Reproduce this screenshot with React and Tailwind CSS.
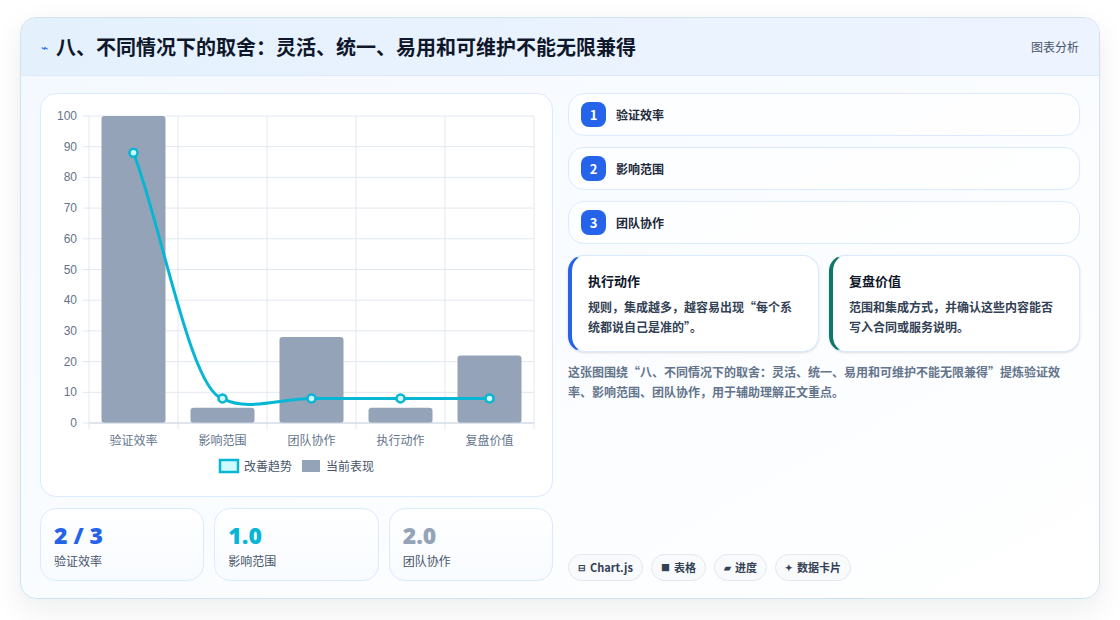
import React from 'react';

const font = { fontFamily: '"Noto Sans CJK SC", "Noto Sans", sans-serif' };

const bars = [100, 5, 28, 5, 22];
const labels = ['验证效率', '影响范围', '团队协作', '执行动作', '复盘价值'];

const Chart = () => {
  const L = 48, R = 493, T = 22, B = 329;
  const y = (v) => B - (v / 100) * (B - T);
  const cw = (R - L) / 5;
  return (
    <svg width="512" height="403" className="block">
      {[0, 10, 20, 30, 40, 50, 60, 70, 80, 90, 100].map((v) => (
        <g key={v}>
          <line x1={L - 6} x2={R} y1={y(v)} y2={y(v)} stroke="#e2e8f0" strokeWidth="1" />
          <text x={L - 12} y={y(v) + 4} textAnchor="end" fontSize="12" fill="#64748b" fontFamily="Liberation Sans, sans-serif">{v}</text>
        </g>
      ))}
      {[0, 1, 2, 3, 4, 5].map((i) => (
        <line key={i} x1={L + cw * i} x2={L + cw * i} y1={T} y2={B + 6} stroke="#e2e8f0" strokeWidth="1" />
      ))}
      {bars.map((v, i) => (
        <rect key={i} x={L + cw * i + 12.5} y={y(v)} width="64" height={B - y(v)} rx="3" fill="#94a3b8" />
      ))}
      <line x1={L} x2={R} y1={B} y2={B} stroke="#cbd5e1" />
      {labels.map((t, i) => (
        <text key={t} x={L + cw * i + cw / 2} y={351} textAnchor="middle" fontSize="12" fill="#64748b" fontFamily='"Noto Sans CJK SC", sans-serif'>{t}</text>
      ))}
      <path d="M92.5 58.8 C 120 130, 150 298, 181.5 304.4 C 205 318, 240 304.4, 270.5 304.4 L 448.5 304.4" fill="none" stroke="#06b6d4" strokeWidth="3" />
      {[[92.5, 58.8], [181.5, 304.4], [270.5, 304.4], [359.5, 304.4], [448.5, 304.4]].map(([cx, cy], i) => (
        <circle key={i} cx={cx} cy={cy} r="4" fill="#cffafe" stroke="#06b6d4" strokeWidth="2.5" />
      ))}
      <rect x="179" y="366" width="18" height="12" fill="#cffafe" stroke="#06b6d4" strokeWidth="2.5" />
      <text x="203" y="377" fontSize="12" fill="#475569" fontFamily='"Noto Sans CJK SC", sans-serif'>改善趋势</text>
      <rect x="261" y="366" width="18" height="12" fill="#94a3b8" />
      <text x="285" y="377" fontSize="12" fill="#475569" fontFamily='"Noto Sans CJK SC", sans-serif'>当前表现</text>
    </svg>
  );
};

const Stat = ({ value, label, color }) => (
  <div className="flex-1 h-[73px] rounded-2xl border border-[#dbeafe] bg-gradient-to-b from-white to-[#f8fbff] px-[13px] pt-[12px]">
    <div className={`text-[23px] leading-[28px] font-black ${color}`} style={{ fontFamily: '"Open Sans", sans-serif' }}>{value}</div>
    <div className="text-[12px] text-[#475569] mt-[3px]">{label}</div>
  </div>
);

const Step = ({ n, text }) => (
  <div className="h-[43px] rounded-2xl border border-[#dbeafe] bg-white/70 flex items-center px-[12px] gap-[10px]">
    <div className="w-[25px] h-[25px] rounded-lg bg-[#2563eb] text-white text-[13px] font-bold flex items-center justify-center">{n}</div>
    <div className="text-[12px] font-semibold text-[#1e293b]">{text}</div>
  </div>
);

const Chip = ({ icon, text }) => (
  <div className="h-[27px] rounded-full border border-[#e2e8f0] bg-[#f8fafc] px-[9px] flex items-center gap-[4px] text-[11px] font-semibold text-[#334155]">
    <span className="text-[9px]">{icon}</span>{text}
  </div>
);

export default function App() {
  return (
    <div className="w-[1120px] h-[620px] bg-white p-[20px] pt-[17px]" style={font}>
      <div className="w-[1080px] h-[582px] rounded-2xl border border-[#cfe3ee] bg-gradient-to-br from-[#f4f9ff] to-white shadow-[0_10px_30px_rgba(15,23,42,0.08)] overflow-hidden flex flex-col">
        <div className="h-[58px] shrink-0 flex items-center justify-between px-[20px] bg-gradient-to-r from-[#e4f1fd] to-[#eef4ff] border-b border-[#dbeafe]">
          <div className="flex items-center gap-[8px]">
            <span className="text-[#2563eb] text-[12px]">⌁</span>
            <span className="text-[20px] font-bold text-[#0f172a]">八、不同情况下的取舍：灵活、统一、易用和可维护不能无限兼得</span>
          </div>
          <span className="text-[12px] text-[#475569]">图表分析</span>
        </div>
        <div className="flex-1 flex gap-[15px] px-[19px] pt-[17px] pb-[17px]">
          <div className="w-[513px] flex flex-col gap-[11px]">
            <div className="h-[404px] rounded-2xl border border-[#dbeafe] bg-white">
              <Chart />
            </div>
            <div className="flex gap-[10px]">
              <Stat value="2 / 3" label="验证效率" color="text-[#2563eb]" />
              <Stat value="1.0" label="影响范围" color="text-[#06b6d4]" />
              <Stat value="2.0" label="团队协作" color="text-[#94a3b8]" />
            </div>
          </div>
          <div className="flex-1 flex flex-col">
            <div className="flex flex-col gap-[11px]">
              <Step n="1" text="验证效率" />
              <Step n="2" text="影响范围" />
              <Step n="3" text="团队协作" />
            </div>
            <div className="flex gap-[10px] mt-[11px]">
              <div className="flex-1 h-[97px] rounded-2xl border border-[#dbeafe] border-l-4 border-l-[#2563eb] bg-white px-[16px] pt-[15px] shadow-sm">
                <div className="text-[13px] font-bold text-[#0f172a]">执行动作</div>
                <div className="text-[12px] leading-[20px] font-semibold text-[#334155] mt-[6px]">规则，集成越多，越容易出现“每个系统都说自己是准的”。</div>
              </div>
              <div className="flex-1 h-[97px] rounded-2xl border border-[#dbeafe] border-l-4 border-l-[#0f766e] bg-white px-[16px] pt-[15px] shadow-sm">
                <div className="text-[13px] font-bold text-[#0f172a]">复盘价值</div>
                <div className="text-[12px] leading-[20px] font-semibold text-[#334155] mt-[6px]">范围和集成方式，并确认这些内容能否写入合同或服务说明。</div>
              </div>
            </div>
            <div className="text-[12px] leading-[20px] font-semibold text-[#64748b] mt-[10px]">这张图围绕“八、不同情况下的取舍：灵活、统一、易用和可维护不能无限兼得”提炼验证效率、影响范围、团队协作，用于辅助理解正文重点。</div>
            <div className="mt-auto flex gap-[8px]">
              <Chip icon="⊟" text="Chart.js" />
              <Chip icon="■" text="表格" />
              <Chip icon="▰" text="进度" />
              <Chip icon="✦" text="数据卡片" />
            </div>
          </div>
        </div>
      </div>
    </div>
  );
}
